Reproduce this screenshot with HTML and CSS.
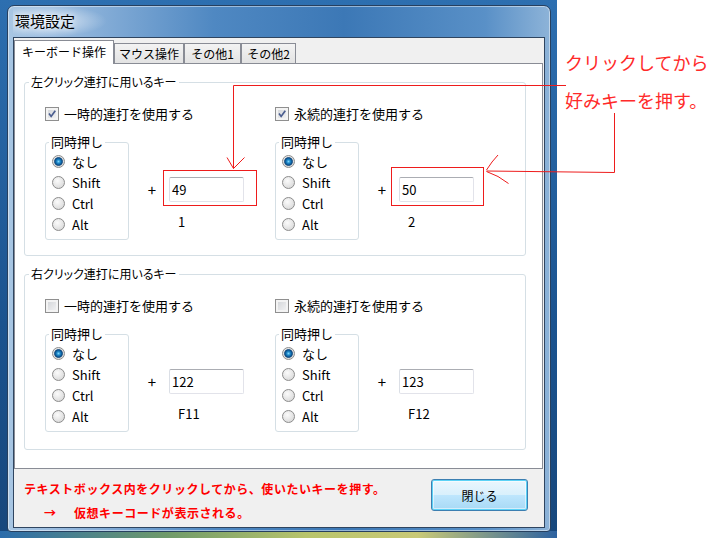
FILE: index.html
```html
<!DOCTYPE html>
<html lang="ja">
<head>
  <meta charset="UTF-8" />
  <title>環境設定</title>
  <link rel="stylesheet" href="styles.css">
</head>
<body>
  <div class="screen">

    <div class="desktop">
      <div class="window">
        <div class="titlebar">環境設定</div>

        <div class="client">
          <!-- tab strip -->
          <div class="tabs">
            <div class="tab active">キーボード操作</div>
            <div class="tab t2">マウス操作</div>
            <div class="tab t3">その他1</div>
            <div class="tab t4">その他2</div>
          </div>

          <div class="pane">
            <div class="group">
              <div class="group-title">左クリック連打に用いるキー</div>
              <div class="cols">
                <div class="col">
                  <div class="check"><span class="box"><svg viewBox="0 0 14 14"><path d="M3.5 6.5 L6 9.8 L10.8 3.2" /></svg></span>一時的連打を使用する</div>
                  <div class="mods-row">
                    <div class="mods">
                      <div class="mods-title">同時押し</div>
                      <div class="radios">
                        <div class="radio"><span class="dot on"></span>なし</div>
                        <div class="radio"><span class="dot"></span>Shift</div>
                        <div class="radio"><span class="dot"></span>Ctrl</div>
                        <div class="radio"><span class="dot"></span>Alt</div>
                      </div>
                    </div>
                    <span class="plus">+</span>
                    <div class="keycode">
                      <div class="field">49</div>
                      <div class="keyname">1</div>
                    </div>
                  </div>
                </div>
                <div class="col">
                  <div class="check"><span class="box"><svg viewBox="0 0 14 14"><path d="M3.5 6.5 L6 9.8 L10.8 3.2" /></svg></span>永続的連打を使用する</div>
                  <div class="mods-row">
                    <div class="mods">
                      <div class="mods-title">同時押し</div>
                      <div class="radios">
                        <div class="radio"><span class="dot on"></span>なし</div>
                        <div class="radio"><span class="dot"></span>Shift</div>
                        <div class="radio"><span class="dot"></span>Ctrl</div>
                        <div class="radio"><span class="dot"></span>Alt</div>
                      </div>
                    </div>
                    <span class="plus">+</span>
                    <div class="keycode">
                      <div class="field">50</div>
                      <div class="keyname">2</div>
                    </div>
                  </div>
                </div>
              </div>
            </div>

            <div class="group">
              <div class="group-title">右クリック連打に用いるキー</div>
              <div class="cols">
                <div class="col">
                  <div class="check"><span class="box"></span>一時的連打を使用する</div>
                  <div class="mods-row">
                    <div class="mods">
                      <div class="mods-title">同時押し</div>
                      <div class="radios">
                        <div class="radio"><span class="dot on"></span>なし</div>
                        <div class="radio"><span class="dot"></span>Shift</div>
                        <div class="radio"><span class="dot"></span>Ctrl</div>
                        <div class="radio"><span class="dot"></span>Alt</div>
                      </div>
                    </div>
                    <span class="plus">+</span>
                    <div class="keycode">
                      <div class="field">122</div>
                      <div class="keyname">F11</div>
                    </div>
                  </div>
                </div>
                <div class="col">
                  <div class="check"><span class="box"></span>永続的連打を使用する</div>
                  <div class="mods-row">
                    <div class="mods">
                      <div class="mods-title">同時押し</div>
                      <div class="radios">
                        <div class="radio"><span class="dot on"></span>なし</div>
                        <div class="radio"><span class="dot"></span>Shift</div>
                        <div class="radio"><span class="dot"></span>Ctrl</div>
                        <div class="radio"><span class="dot"></span>Alt</div>
                      </div>
                    </div>
                    <span class="plus">+</span>
                    <div class="keycode">
                      <div class="field">123</div>
                      <div class="keyname">F12</div>
                    </div>
                  </div>
                </div>
              </div>
            </div>
          </div>

          <div class="footer">
            <div class="hint">
              <p>テキストボックス内をクリックしてから、使いたいキーを押す。</p>
              <p><span class="arrow">→</span>仮想キーコードが表示される。</p>
            </div>
            <button class="close">閉じる</button>
          </div>
        </div>
      </div>
    </div>

    <!-- hand-written notes on the right -->
    <div class="notes">
      <p>クリックしてから</p>
      <p>好みキーを押す。</p>
    </div>

    <!-- red marks drawn over the screenshot -->
    <svg class="marks" width="711" height="538" viewBox="0 0 711 538">
      <rect x="163.5" y="170.5" width="93" height="35" />
      <rect x="391.5" y="167.5" width="92" height="38" />
      <path d="M566 85.5 H233.5 V168.5" />
      <path d="M227 157.5 L233.5 168.5 L244.5 157.5" />
      <path d="M614.5 113 V172.5 L486.5 171" />
      <path d="M486.5 170 L492 162 L498 155" />
      <path d="M486.5 171.5 L498 176.5 L508.5 183.5" />
    </svg>

  </div>
</body>
</html>
```

FILE: styles.css
```css
* {
  box-sizing: border-box;
}

body {
  margin: 0;
  background: #fff;
  font-family: "Noto Sans CJK JP", "Noto Sans", sans-serif;
  color: #000;
}

p {
  margin: 0;
}

.screen {
  position: relative;
  display: flex;
  width: 711px;
  height: 538px;
  overflow: hidden;
}

/* desktop + aero window */
.desktop {
  flex: 0 0 557px;
  height: 538px;
  padding: 5px 0 0 7px;
  background:
    linear-gradient(to right, #2b6cab 0, #6f9a6a 30%, #b8c46c 55%, #c9c977 75%, #2d62a0 100%) bottom / 100% 7px no-repeat,
    linear-gradient(to bottom, #2d6fb0, #1b538f 60%, #17477c);
}

.window {
  width: 544px;
  height: 527px;
  border: 1px solid #27405f;
  border-radius: 7px 7px 4px 4px;
  padding: 0 5px 3px;
  background: linear-gradient(to right, #a8c6e3 0, #9cbde0 8%, #4f88c2 38%, #3c78b6 62%, #5990c7 88%, #8db3d8 100%);
  box-shadow: inset 0 0 0 1px rgba(255, 255, 255, 0.45);
}

.titlebar {
  height: 31px;
  padding-left: 2px;
  font-size: 15px;
  line-height: 30px;
  background: radial-gradient(ellipse 60px 16px at 34px 15px, rgba(255, 255, 255, 0.7), rgba(255, 255, 255, 0));
  text-shadow: 0 0 6px #fff;
}

.client {
  display: flex;
  flex-direction: column;
  height: 491px;
  border: 1px solid #2f4560;
  background: #f0f0f0;
}

/* tabs */
.tabs {
  display: flex;
  align-items: flex-end;
  height: 25px;
}

.tab {
  height: 20px;
  border: 1px solid #898c95;
  border-bottom: none;
  background: linear-gradient(#f3f3f3, #e3e3e3);
  font-size: 12px;
  line-height: 19px;
  text-align: center;
}

.tab.active {
  position: relative;
  z-index: 1;
  width: 100px;
  height: 24px;
  margin-bottom: -1px;
  background: #fff;
  line-height: 22px;
}

.t2 { width: 70px; }
.t3 { width: 57px; }
.t4 { width: 55px; }

.pane {
  height: 406px;
  margin-right: 1px;
  padding-top: 18px;
  border: 1px solid #898c95;
  background: #fff;
}

/* group boxes */
.group {
  width: 502px;
  height: 174px;
  margin-left: 9px;
  border: 1px solid #d5dfe5;
  border-radius: 3px;
}

.group + .group {
  height: 176px;
  margin-top: 18px;
}

.group-title {
  width: max-content;
  margin: -9px 0 0 4px;
  padding: 0 2px;
  background: #fff;
  font-size: 12px;
  line-height: 16px;
  font-feature-settings: "palt";
}

.cols {
  display: grid;
  grid-template-columns: 230px 230px;
  margin-top: 16px;
  padding-left: 19px;
}

.check {
  display: flex;
  align-items: center;
  gap: 5px;
  height: 16px;
  font-size: 13px;
  line-height: 16px;
}

.box {
  width: 14px;
  height: 14px;
  margin-left: 1px;
  border: 1px solid #8f8f8f;
  background: linear-gradient(135deg, #cfd2d6, #f6f6f6);
  box-shadow: inset 0 0 0 2px #f3f3f3;
}

.box svg {
  display: block;
  width: 12px;
  height: 12px;
}

.box path {
  fill: none;
  stroke: #4a5d8f;
  stroke-width: 2;
}

.mods-row {
  display: flex;
  align-items: flex-start;
  margin-top: 20px;
}

.mods {
  width: 84px;
  height: 98px;
  margin-left: 1px;
  border: 1px solid #d5dfe5;
  border-radius: 3px;
}

.mods-title {
  width: max-content;
  margin: -9px 0 0 3px;
  padding: 0 2px;
  background: #fff;
  font-size: 13px;
  line-height: 16px;
}

.radios {
  padding-top: 1px;
}

.radio {
  display: flex;
  align-items: center;
  gap: 7px;
  height: 21px;
  padding-left: 6px;
  font-size: 13px;
}

.dot {
  width: 13px;
  height: 13px;
  border: 1px solid #8c8c8c;
  border-radius: 50%;
  background: radial-gradient(circle at 40% 35%, #fbfbfb, #d2d2d2);
}

.dot.on {
  background:
    radial-gradient(circle 4.6px at 50% 50%, #7fd6fa 0, #1b86c8 40%, #0a4a84 80%, rgba(10, 60, 110, 0.6) 95%, rgba(10, 60, 110, 0) 100%),
    radial-gradient(circle at 40% 35%, #f6f6f6, #cfcfcf);
}

.plus {
  width: 12px;
  margin: 35px 11px 0 17px;
  font-size: 15px;
  line-height: 25px;
  text-align: center;
}

.keycode {
  margin-top: 35px;
}

.field {
  width: 75px;
  height: 25px;
  padding-left: 2px;
  border: 1px solid #e2e3ea;
  border-top-color: #abadb3;
  border-left-color: #dbdfe6;
  border-radius: 2px;
  font-size: 13px;
  line-height: 23px;
}

.keyname {
  margin-top: 12px;
  padding-left: 9px;
  font-size: 13px;
  line-height: 16px;
}

/* bottom strip */
.footer {
  flex: 1;
  display: flex;
  justify-content: space-between;
  align-items: flex-start;
  padding: 8px 16px 0 10px;
}

.hint {
  color: #f00;
  font-size: 12px;
  font-weight: bold;
  line-height: 24px;
  letter-spacing: 0.55px;
}

.arrow {
  display: inline-block;
  width: 30px;
  margin-left: 20px;
}

.close {
  width: 97px;
  height: 32px;
  margin-top: 2px;
  border: 1px solid #3c7fb1;
  border-radius: 3px;
  background: linear-gradient(#eaf6fd 0, #d9f0fc 50%, #bee6fd 51%, #a7d9f5 100%);
  box-shadow: inset 0 0 0 1px #5cd2f6, inset 0 0 0 2px rgba(255, 255, 255, 0.5);
  font-family: inherit;
  font-size: 12px;
  color: #000;
  padding: 0;
}

/* annotations */
.notes {
  flex: 1;
  padding: 43px 0 0 8px;
  color: #ff2a2a;
  font-size: 18px;
  line-height: 38px;
  white-space: nowrap;
}

.marks {
  position: absolute;
  left: 0;
  top: 0;
  pointer-events: none;
}

.marks rect,
.marks path {
  fill: none;
  stroke: #ee1c1c;
  stroke-width: 1;
}
```
